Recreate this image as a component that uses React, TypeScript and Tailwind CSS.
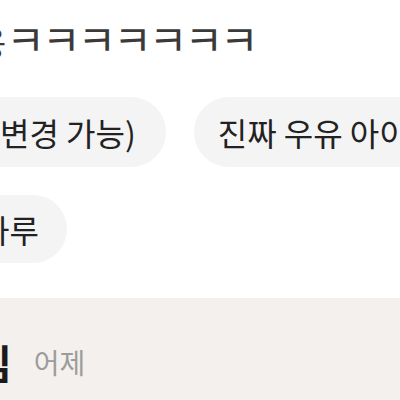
const font = "font-['Noto_Sans_CJK_KR','Noto_Sans',sans-serif]"

function Chip({ children, className }: { children: React.ReactNode; className?: string }) {
	return (
		<div className={`flex shrink-0 items-center whitespace-nowrap bg-[#f4f4f4] text-[32px] text-[#222] ${className ?? ''}`}>
			{children}
		</div>
	)
}

export default function App() {
	return (
		<div className={`flex h-[400px] w-[400px] flex-col overflow-hidden bg-white ${font}`}>
			<div className="mt-[16px] flex h-[46px] shrink-0 items-baseline whitespace-nowrap leading-[44px] text-[#3a3a3a]">
				<span className="-ml-[25px] text-[34px]">옹</span>
				<span className="text-[42px] tracking-[-3px]">ㅋㅋㅋㅋㅋㅋㅋ</span>
			</div>

			<div className="mt-[35px] flex gap-[28px]">
				<Chip className="h-[70px] rounded-r-full pr-[30px]">
					<span>변경 가능)</span>
				</Chip>
				<Chip className="h-[70px] rounded-l-full pl-[24px] pr-[24px]">
					<span>진짜 우유 아이스크림</span>
				</Chip>
			</div>

			<div className="mt-[28px] flex">
				<Chip className="h-[68px] rounded-r-full pr-[28px]">
					<span className="-ml-[20px]">하루</span>
				</Chip>
			</div>

			<div className="mt-[35px] flex flex-1 items-start bg-[#f4f0ed] pt-[40px]">
				<div className="flex items-center gap-[22px] whitespace-nowrap">
					<span className="-ml-[25px] text-[40px] font-bold leading-[48px] text-[#1a1a1a]">님</span>
					<span className="text-[28px] leading-[48px] text-[#9c9c9c]">어제</span>
				</div>
			</div>
		</div>
	)
}
